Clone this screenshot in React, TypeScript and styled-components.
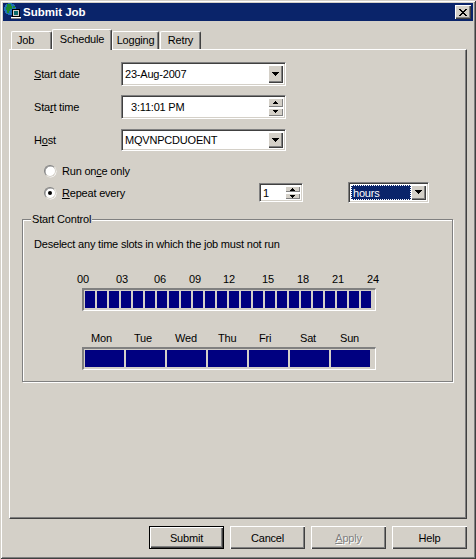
import React from "react";
import styled, { createGlobalStyle, css } from "styled-components";

const Global = createGlobalStyle`
  html, body { margin: 0; padding: 0; background: #d4d0c8; }
  body { font-family: "Liberation Sans", Arial, sans-serif; font-size: 11px; letter-spacing: -0.2px; color: #000; }
  u { text-underline-offset: 1px; text-decoration-thickness: 1px; }
`;

const Win = styled.div`
  box-sizing: border-box;
  width: 476px;
  height: 559px;
  padding: 3px;
  display: flex;
  flex-direction: column;
  background: #d4d0c8;
  box-shadow: inset 1px 1px 0 #d4d0c8, inset -1px -1px 0 #404040, inset 2px 2px 0 #fff, inset -2px -2px 0 #808080;
`;
const TitleBar = styled.div`
  height: 18px;
  flex: none;
  display: flex;
  align-items: center;
  background: #0a246a;
  color: #fff;
  font-weight: bold;
  font-size: 11.5px;
  letter-spacing: 0;
  padding: 0 2px 0 1px;
`;
const TitleText = styled.span`
  margin-left: 1px;
  flex: 1;
`;
const CloseBtn = styled.div`
  width: 16px;
  height: 14px;
  background: #d4d0c8;
  box-shadow: inset 1px 1px 0 #fff, inset -1px -1px 0 #404040, inset -2px -2px 0 #808080;
  display: flex;
  align-items: center;
  justify-content: center;
`;
const Body = styled.div`
  flex: 1;
  display: flex;
  flex-direction: column;
  padding: 8px 6px 7px;
`;
const TabRow = styled.div`
  height: 20px;
  display: flex;
  align-items: flex-end;
  padding-left: 2px;
  position: relative;
  z-index: 1;
`;
const Tab = styled.div<{ $w: number; $active?: boolean; $gap?: number; $pad?: number }>`
  box-sizing: border-box;
  width: ${(p) => p.$w}px;
  margin-left: ${(p) => p.$gap ?? 0}px;
  background: #d4d0c8;
  border-top: 1px solid #fff;
  border-left: 1px solid #fff;
  border-right: 1px solid #404040;
  box-shadow: inset -1px 0 0 #808080;
  border-radius: 2px 2px 0 0;
  text-align: ${(p) => (p.$pad ? "left" : "center")};
  padding-left: ${(p) => p.$pad ?? 0}px;
  height: 18px;
  line-height: 16px;
  ${(p) =>
    p.$active &&
    css`
      height: 21px;
      margin-bottom: -1px;
      line-height: 18px;
      padding-bottom: 2px;
    `}
`;
const Panel = styled.div`
  box-sizing: border-box;
  height: 470px;
  flex: none;
  padding: 12px 12px 0;
  border-top: 1px solid #fff;
  border-left: 1px solid #fff;
  border-right: 1px solid #404040;
  border-bottom: 1px solid #404040;
  box-shadow: inset -1px -1px 0 #808080;
`;
const Row = styled.div<{ $h: number; $mb: number }>`
  display: grid;
  grid-template-columns: 99px 165px;
  align-items: center;
  height: ${(p) => p.$h}px;
  margin-bottom: ${(p) => p.$mb}px;
`;
const Label = styled.div`
  padding-left: 12px;
`;
const Sunken = styled.div`
  box-sizing: border-box;
  height: 100%;
  display: flex;
  align-items: stretch;
  background: #fff;
  border: 1px solid;
  border-color: #808080 #fff #fff #808080;
  box-shadow: inset 1px 1px 0 #404040, inset -1px -1px 0 #d4d0c8;
  padding: 2px;
`;
const FieldText = styled.div<{ $indent?: number; $sel?: boolean }>`
  flex: 1;
  min-width: 0;
  display: flex;
  align-items: center;
  padding-left: ${(p) => p.$indent ?? 1}px;
  ${(p) =>
    p.$sel &&
    css`
      background: #0a246a;
      color: #fff;
      outline: 1px dotted #fff;
      outline-offset: -1px;
      padding-left: 2px;
    `}
`;
const DropBtn = styled.div`
  flex: none;
  width: 15px;
  background: #d4d0c8;
  box-shadow: inset 1px 1px 0 #fff, inset -1px -1px 0 #404040, inset -2px -2px 0 #808080;
  display: flex;
  align-items: center;
  justify-content: center;
`;
const SpinCol = styled.div`
  flex: none;
  width: 15px;
  display: flex;
  flex-direction: column;
  gap: 1px;
`;
const SpinBtn = styled(DropBtn)`
  width: 100%;
  flex: 1;
  box-shadow: inset 1px 1px 0 #fff, inset -1px -1px 0 #808080;
`;
const RadioRow = styled.div<{ $h: number }>`
  display: grid;
  grid-template-columns: 215px 44px 45px 81px;
  align-items: center;
  height: ${(p) => p.$h}px;
  padding-left: 22px;
`;
const RadioLabel = styled.div`
  display: flex;
  align-items: center;
  gap: 6px;
`;
const RadioMark = styled.span<{ $on?: boolean }>`
  box-sizing: border-box;
  width: 12px;
  height: 12px;
  border-radius: 50%;
  background: #fff;
  border: 1px solid;
  border-color: #808080 #d4d0c8 #d4d0c8 #808080;
  box-shadow: 0.5px 0.5px 0 #fff, inset 0.5px 0.5px 0 #808080;
  display: flex;
  align-items: center;
  justify-content: center;
  &::after {
    content: "";
    width: 4px;
    height: 4px;
    border-radius: 50%;
    background: ${(p) => (p.$on ? "#000" : "transparent")};
  }
`;
const SpinOuter = styled(Sunken)`
  height: 19px;
`;
const ComboOuter = styled(Sunken)`
  height: 21px;
`;
const Group = styled.div`
  box-sizing: border-box;
  position: relative;
  width: 431px;
  height: 163px;
  margin-top: 16px;
  border: 1px solid #808080;
  box-shadow: 1px 1px 0 #fff, inset 1px 1px 0 #fff;
  padding: 18px 0 0 11px;
`;
const Legend = styled.div`
  position: absolute;
  left: 8px;
  top: -7px;
  padding: 0 1px;
  background: #d4d0c8;
  line-height: 13px;
`;
const Scale = styled.div<{ $mt: number; $ml: number }>`
  display: flex;
  height: 14px;
  line-height: 14px;
  margin-top: ${(p) => p.$mt}px;
  margin-left: ${(p) => p.$ml}px;
`;
const ScaleCell = styled.span<{ $w: number }>`
  flex: none;
  width: ${(p) => p.$w}px;
`;
const Slots = styled.div`
  box-sizing: border-box;
  width: 294px;
  height: 23px;
  margin: 2px 0 0 48px;
  display: flex;
  gap: 2px;
  padding: 1px 2px 2px 1px;
  border-style: solid;
  border-width: 2px 1px 1px 2px;
  border-color: #808080 #fff #fff #808080;
`;
const Slot = styled.div<{ $w: number }>`
  flex: none;
  width: ${(p) => p.$w}px;
  background: #000080;
`;
const Footer = styled.div`
  margin-top: 7px;
  height: 23px;
  display: flex;
  justify-content: flex-end;
  gap: 6px;
`;
const Btn = styled.div<{ $def?: boolean; $off?: boolean }>`
  box-sizing: border-box;
  width: 75px;
  height: 23px;
  display: flex;
  align-items: center;
  justify-content: center;
  background: #d4d0c8;
  box-shadow: inset 1px 1px 0 #fff, inset -1px -1px 0 #404040, inset -2px -2px 0 #808080;
  ${(p) =>
    p.$def &&
    css`
      border: 1px solid #000;
    `}
  ${(p) =>
    p.$off &&
    css`
      color: #808080;
      text-shadow: 1px 1px 0 #fff;
    `}
`;

const DownArrow = ({ big }: { big?: boolean }) => (
  <svg width="9" height={big ? 5 : 3} viewBox={big ? "0 0 9 5" : "0 0 9 3"} shapeRendering="crispEdges">
    {big ? <path d="M1 0h7v1h-1v1h-1v1h-1v1h-1v-1h-1v-1h-1v-1h-1z" fill="#000" /> : <path d="M2 0h5v1h-1v1h-1v1h-1v-1h-1v-1h-1z" fill="#000" />}
  </svg>
);
const UpArrow = () => (
  <svg width="9" height="3" viewBox="0 0 9 3" shapeRendering="crispEdges">
    <path d="M4 0h1v1h1v1h1v1h-5v-1h1v-1h1z" fill="#000" />
  </svg>
);
const CloseIcon = () => (
  <svg width="8" height="7" viewBox="0 0 8 7" shapeRendering="crispEdges">
    <path d="M0 0h2v1h1v1h2v-1h1v-1h2v1h-1v1h-1v1h-1v1h1v1h1v1h1v1h-2v-1h-1v-1h-2v1h-1v1h-2v-1h1v-1h1v-1h1v-1h-1v-1h-1v-1h-1z" fill="#000" />
  </svg>
);
const AppIcon = () => (
  <svg width="18" height="18" viewBox="0 0 18 18" shapeRendering="crispEdges" style={{ flex: "none" }}>
    <path d="M4 0h4v1h2v1h1v2h1v4h-1v2h-1v1h-2v1h-4v-1h-2v-1h-1v-2h-1v-4h1v-2h1v-1h2z" fill="#1f6fb8" />
    <path d="M3 1h4v2h1v3h-2v2h-1v2h-2v-3h-1v-3h1zM9 3h2v2h-2z" fill="#1c8a2e" />
    <path d="M8 6h8v8h-8z" fill="#000" />
    <path d="M9 7h6v6h-6z" fill="#d4d0c8" />
    <path d="M10 8h4v4h-4z" fill="#0a6a6a" />
    <path d="M7 14h10v2h-10z" fill="#fff" />
    <path d="M7 15h10v1h-10z" fill="#808080" />
  </svg>
);

const hours: [string, number][] = [["00", 39], ["03", 38], ["06", 35], ["09", 34], ["12", 39], ["15", 35], ["18", 35], ["21", 35], ["24", 20]];
const days: [string, number][] = [["Mon", 43], ["Tue", 41], ["Wed", 43], ["Thu", 41], ["Fri", 41], ["Sat", 40], ["Sun", 30]];

export default function App() {
  return (
    <Win>
      <Global />
      <TitleBar>
        <AppIcon />
        <TitleText>Submit Job</TitleText>
        <CloseBtn><CloseIcon /></CloseBtn>
      </TitleBar>
      <Body>
        <TabRow>
          <Tab $w={41} $pad={5}>Job</Tab>
          <Tab $w={60} $active>Schedule</Tab>
          <Tab $w={47}>Logging</Tab>
          <Tab $w={41} $gap={1}>Retry</Tab>
        </TabRow>
        <Panel>
          <Row $h={24} $mb={9}>
            <Label><u>S</u>tart date</Label>
            <Sunken>
              <FieldText>23-Aug-2007</FieldText>
              <DropBtn><DownArrow big /></DropBtn>
            </Sunken>
          </Row>
          <Row $h={24} $mb={10}>
            <Label>Sta<u>r</u>t time</Label>
            <Sunken>
              <FieldText $indent={7}>3:11:01 PM</FieldText>
              <SpinCol>
                <SpinBtn><UpArrow /></SpinBtn>
                <SpinBtn><DownArrow /></SpinBtn>
              </SpinCol>
            </Sunken>
          </Row>
          <Row $h={22} $mb={8}>
            <Label>H<u>o</u>st</Label>
            <Sunken>
              <FieldText>MQVNPCDUOENT</FieldText>
              <DropBtn><DownArrow big /></DropBtn>
            </Sunken>
          </Row>
          <RadioRow $h={23}>
            <RadioLabel><RadioMark /><span>Run on<u>c</u>e only</span></RadioLabel>
          </RadioRow>
          <RadioRow $h={21}>
            <RadioLabel><RadioMark $on /><span><u>R</u>epeat every</span></RadioLabel>
            <SpinOuter>
              <FieldText>1</FieldText>
              <SpinCol>
                <SpinBtn><UpArrow /></SpinBtn>
                <SpinBtn><DownArrow /></SpinBtn>
              </SpinCol>
            </SpinOuter>
            <span />
            <ComboOuter>
              <FieldText $sel>hours</FieldText>
              <DropBtn><DownArrow big /></DropBtn>
            </ComboOuter>
          </RadioRow>
          <Group>
            <Legend>Start Control</Legend>
            <div>Deselect any time slots in which the job must not run</div>
            <Scale $mt={22} $ml={43}>
              {hours.map(([t, w]) => <ScaleCell key={t} $w={w}>{t}</ScaleCell>)}
            </Scale>
            <Slots>
              {Array.from({ length: 24 }, (_, i) => <Slot key={i} $w={10} />)}
            </Slots>
            <Scale $mt={20} $ml={57}>
              {days.map(([t, w]) => <ScaleCell key={t} $w={w}>{t}</ScaleCell>)}
            </Scale>
            <Slots>
              {days.map(([t]) => <Slot key={t} $w={39} />)}
            </Slots>
          </Group>
        </Panel>
        <Footer>
          <Btn $def>Submit</Btn>
          <Btn>Cancel</Btn>
          <Btn $off><span><u>A</u>pply</span></Btn>
          <Btn>Help</Btn>
        </Footer>
      </Body>
    </Win>
  );
}
